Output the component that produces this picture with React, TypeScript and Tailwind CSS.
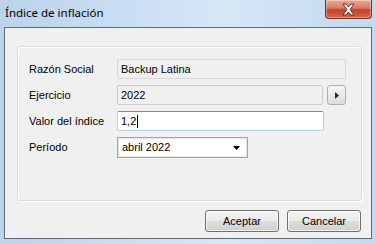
import React from "react";

function CloseButton() {
  return (
    <div className="mr-[4px] flex h-[19px] w-[47px] items-center justify-center rounded-b-[4px] border border-t-0 border-[#7d2a1d] bg-[linear-gradient(to_bottom,#e9a99b_0%,#d97a66_45%,#c4432c_55%,#d2664d_100%)] shadow-[inset_0_0_0_1px_rgba(255,255,255,0.35)]">
      <svg width="15" height="13" viewBox="0 0 15 13">
        <path
          d="M2 1 L5 1 L7.5 4 L10 1 L13 1 L9.2 6.5 L13 12 L10 12 L7.5 9 L5 12 L2 12 L5.8 6.5 Z"
          fill="#ffffff"
          stroke="#6b2a22"
          strokeWidth="1"
          strokeLinejoin="round"
        />
      </svg>
    </div>
  );
}

function Field({ label, children }: { label: string; children: React.ReactNode }) {
  return (
    <>
      <div className="flex items-center text-[11px] text-black">{label}</div>
      <div className="flex items-center">{children}</div>
    </>
  );
}

function WinButton({ children }: { children: React.ReactNode }) {
  return (
    <button
      type="button"
      className="flex h-[22px] w-[74px] items-center justify-center rounded-[3px] border border-[#707070] bg-[linear-gradient(to_bottom,#f2f2f2_0%,#ebebeb_48%,#dddddd_52%,#cfcfcf_100%)] text-[11px] text-black shadow-[inset_0_0_0_1px_rgba(255,255,255,0.7)]"
    >
      {children}
    </button>
  );
}

export default function App() {
  return (
    <div className="flex h-[244px] w-[376px] flex-col bg-[linear-gradient(to_right,#bcd3ec_0%,#cfe2f5_45%,#d6e7f7_60%,#c3d9f0_100%)] font-['Liberation_Sans',Arial,sans-serif]">
      <div className="flex h-[27px] items-start">
        <span className="pl-[5px] pt-[5px] font-['Noto_Sans',sans-serif] text-[11.5px] leading-[16px] text-black">
          Índice de inflación
        </span>
        <div className="ml-auto">
          <CloseButton />
        </div>
      </div>

      <div className="mx-[4px] mb-[5px] flex flex-1 flex-col border border-[#5b6b7c] bg-[#f0f0f0]">
        <div className="ml-[12px] mr-[9px] mt-[18px] h-[155px] rounded-[3px] border border-[#d5dfe5] shadow-[inset_1px_1px_0_#ffffff,1px_1px_0_#ffffff]">
          <div className="grid grid-cols-[88px_1fr] gap-y-[6px] pl-[11px] pt-[12px]">
            <Field label="Razón Social">
              <div className="flex h-[20px] w-[229px] items-center rounded-[2px] border border-[#d9d9d9] bg-[#f0f0f0] pl-[3px] text-[11px] text-black">
                Backup Latina
              </div>
            </Field>
            <Field label="Ejercicio">
              <div className="flex h-[20px] w-[206px] items-center rounded-[2px] border border-[#cdcdcd] bg-[#f0f0f0] pl-[3px] text-[11px] text-black">
                2022
              </div>
              <div className="ml-[4px] flex h-[20px] w-[19px] items-center justify-center rounded-[3px] border border-[#a9b0b8] bg-[linear-gradient(to_bottom,#f6f6f6_0%,#e9e9e9_50%,#dcdcdc_100%)]">
                <svg width="4" height="7" viewBox="0 0 4 7">
                  <path d="M0 0 L4 3.5 L0 7 Z" fill="#1b2a4a" />
                </svg>
              </div>
            </Field>
            <Field label="Valor del índice">
              <div className="flex h-[20px] w-[207px] items-center rounded-[2px] border border-[#b5cfe7] border-t-[#5c93c7] bg-white pl-[3px] text-[11px] text-black">
                1,2
                <span className="ml-[1px] inline-block h-[13px] w-[1px] bg-black" />
              </div>
            </Field>
            <Field label="Período">
              <div className="flex h-[21px] w-[131px] items-center justify-between border border-[#a5a5a5] bg-white pl-[4px] pr-[7px] text-[11px] text-black shadow-[inset_0_0_0_1px_#e6e6e6]">
                abril 2022
                <svg width="7" height="4" viewBox="0 0 7 4">
                  <path d="M0 0 L7 0 L3.5 4 Z" fill="#000000" />
                </svg>
              </div>
            </Field>
          </div>
        </div>

        <div className="mt-[9px] flex justify-end gap-[8px] pr-[10px]">
          <WinButton>Aceptar</WinButton>
          <WinButton>Cancelar</WinButton>
        </div>
      </div>
    </div>
  );
}
